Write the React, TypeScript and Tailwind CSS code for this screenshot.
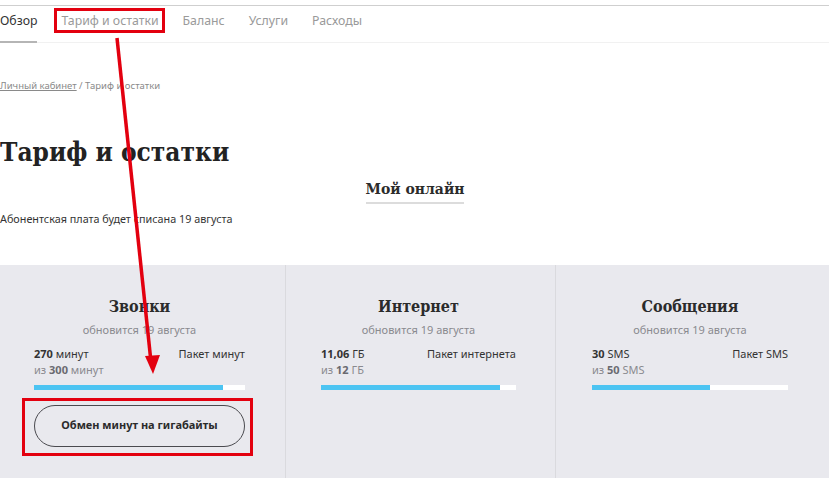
import React from 'react';

const sans = "font-['Noto_Sans','Liberation_Sans',sans-serif]";
const serif = "font-['DejaVu_Serif','Liberation_Serif',serif] font-stretch-condensed";

type Counter = {
  title: string;
  left: number;
  total: number;
  unit: string;
  pack: string;
  pct: number;
  pl: string;
};

const counters: Counter[] = [
  { title: 'Звонки', left: 270, total: 300, unit: 'минут', pack: 'Пакет минут', pct: 89.5, pl: 'pl-[34px] pr-[40px]' },
  { title: 'Интернет', left: 0, total: 12, unit: 'ГБ', pack: 'Пакет интернета', pct: 92, pl: 'pl-[35px] pr-[39px]' },
  { title: 'Сообщения', left: 30, total: 50, unit: 'SMS', pack: 'Пакет SMS', pct: 60, pl: 'pl-[36px] pr-[41px]' },
];

function CounterCard({ c, first }: { c: Counter; first?: boolean }) {
  const amount = c.unit === 'ГБ' ? '11,06' : String(c.left);
  return (
    <div className={`${c.pl} pt-[32px] ${first ? '' : 'border-l border-[#dadade]'}`}>
      <h3 className={`${serif} text-center text-[16px] font-bold leading-[20px] text-[#2b2b2b]`}>{c.title}</h3>
      <p className="mt-[5px] text-center text-[11px] leading-[16px] text-[#8a8a8f]">обновится 19 августа</p>
      <div className="mt-[8px] flex justify-between text-[11px] leading-[16px] text-[#333]">
        <span>
          <b className="font-bold">{amount}</b> {c.unit}
        </span>
        <span>{c.pack}</span>
      </div>
      <div className="text-[11px] leading-[16px] text-[#8a8a8f]">
        из <b className="font-bold text-[#6a6a70]">{c.total}</b> {c.unit}
      </div>
      <div className="mt-[7px] h-[5px] bg-white">
        <div className="h-full bg-[#4cc4f2]" style={{ width: `${c.pct}%` }} />
      </div>
      {first && (
        <button className="mt-[15px] flex h-[42px] w-full items-center justify-center rounded-full border-[1.5px] border-[#4a4a4f] text-[11px] font-bold text-[#2b2b2b]">
          Обмен минут на гигабайты
        </button>
      )}
    </div>
  );
}

export default function App() {
  return (
    <div className={`${sans} relative h-[478px] w-[829px] overflow-hidden bg-white`}>
      <div className="mt-[5px] border-t border-[#cfcfcf]" />
      <nav className="flex h-[37px] items-center gap-6 border-b border-[#f1f1f1] pb-[6px] text-[12.3px] text-[#9a9a9a]">
        <span className="relative text-[#333]">
          Обзор
          <span className="absolute bottom-[-13px] left-0 h-[2px] w-full bg-[#b5b5b5]" />
        </span>
        <span>Тариф и остатки</span>
        <span>Баланс</span>
        <span>Услуги</span>
        <span>Расходы</span>
      </nav>

      <div className="mt-[36px] text-[9.5px] text-[#8a8a8a]">
        <span className="underline">Личный кабинет</span> / Тариф и остатки
      </div>

      <h1 className={`${serif} mt-[42px] text-[26px] font-bold leading-[34px] text-[#222]`}>Тариф и остатки</h1>

      <div className="mt-[8px] flex justify-center pl-[1px]">
        <span className={`${serif} border-b-2 border-[#dcdcdc] pb-[1px] text-[15.5px] font-bold text-[#2b2b2b]`}>Мой онлайн</span>
      </div>

      <p className="mt-[7px] text-[10.8px] text-[#333]">Абонентская плата будет списана 19 августа</p>

      <div className="mt-[38px] grid h-[220px] grid-cols-[285px_270px_274px] bg-[#e9e9ee]">
        {counters.map((c, i) => (
          <CounterCard key={c.title} c={c} first={i === 0} />
        ))}
      </div>

      {/* annotation overlay */}
      <div className="absolute left-[54px] top-[8px] h-[25px] w-[111px] border-[3px] border-[#e3000f]" />
      <div className="absolute left-[22px] top-[398px] h-[58px] w-[231px] border-[3px] border-[#e3000f]" />
      <svg className="absolute left-0 top-0" width="829" height="478" viewBox="0 0 829 478">
        <line x1="117" y1="38" x2="151" y2="362" stroke="#e3000f" strokeWidth="3.5" />
        <polygon points="145,356 160,355 153,374" fill="#e3000f" />
      </svg>
    </div>
  );
}
